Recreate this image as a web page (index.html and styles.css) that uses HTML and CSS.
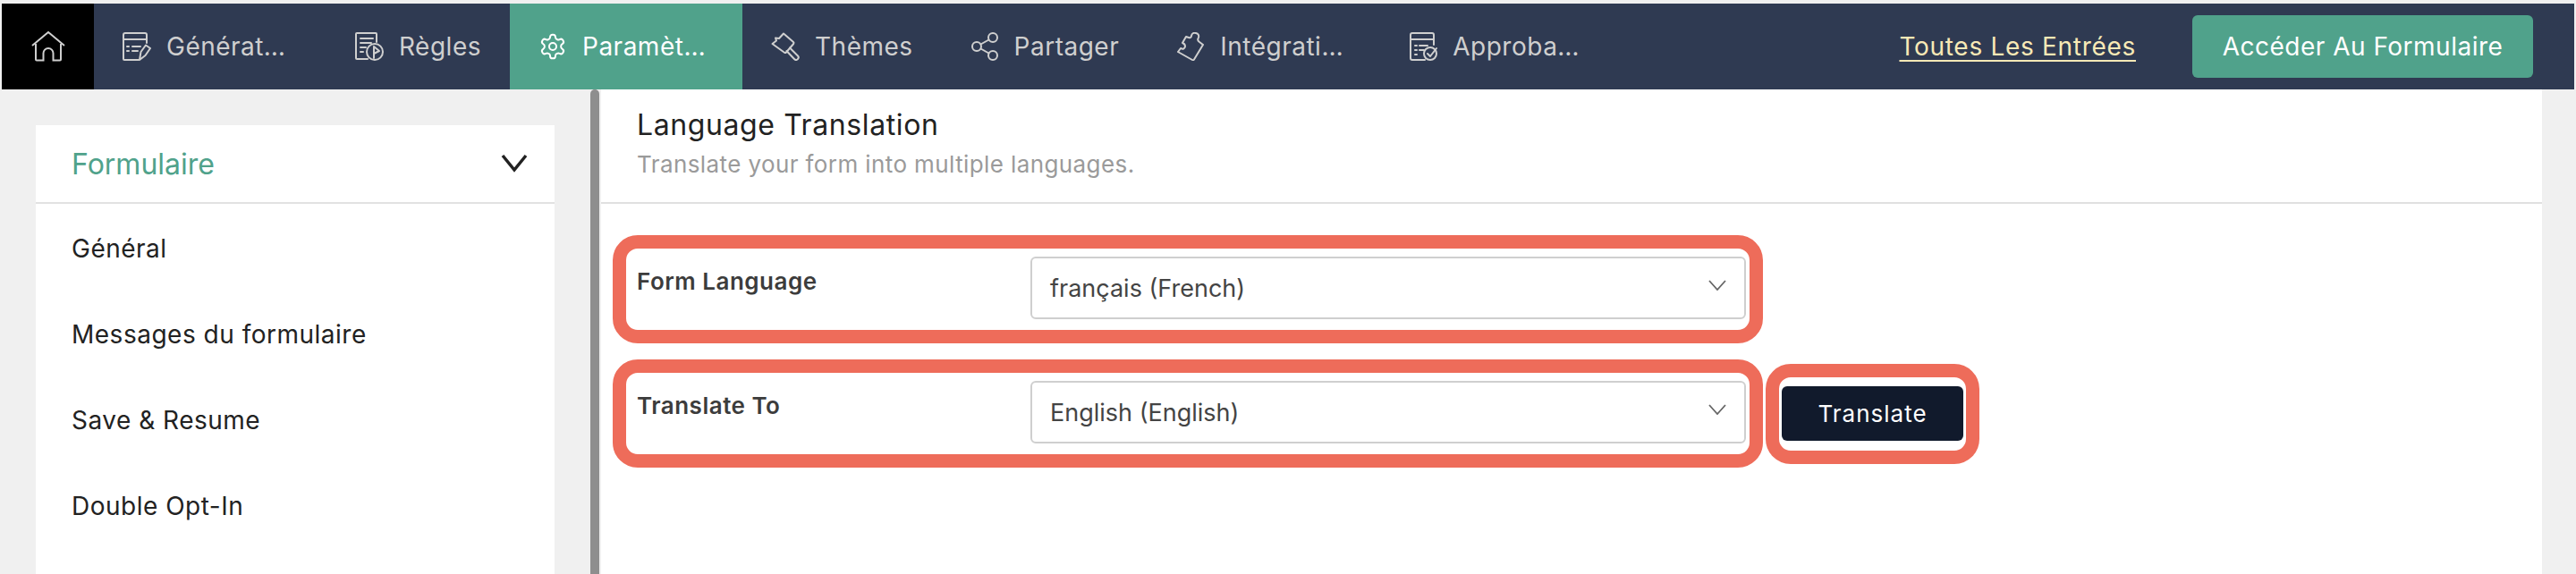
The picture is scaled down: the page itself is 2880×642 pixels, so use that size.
FILE: index.html
```html
<!DOCTYPE html>
<html lang="fr">
<head>
<meta charset="utf-8">
<title>Language Translation</title>
<link rel="stylesheet" href="styles.css">
</head>
<body>
<nav class="topbar">
  <a class="home" href="#"><svg class="ic-home" viewBox="0 0 38 34"><path d="M1 16 19 1l18 15M5 14v17.500a1 1 0 0 0 1 1h7.500v-8a5.500 5.500 0 0 1 11 0v8H32a1 1 0 0 0 1-1V14"/></svg></a>
  <a class="item" href="#"><svg class="icon" viewBox="0 0 32 32"><path d="M27 12V3a2 2 0 0 0-2-2H3a2 2 0 0 0-2 2v27a1 1 0 0 0 1 1h16M1 8h26M5 16h2M11 16h9M5 21h2M11 21h6"/><path d="m19 31 1.500-9L26 14.500l5 3.500-5.500 8z"/></svg><span class="label">Générateur</span></a>
  <a class="item" href="#"><svg class="icon" viewBox="0 0 32 32"><path d="M24 11V2a1 1 0 0 0-1-1H2a1 1 0 0 0-1 1v27a1 1 0 0 0 1 1h12M6 7h14M6 12h12M6 17h6M6 22h3"/><circle cx="22" cy="22" r="9"/><path d="M21 29V16l6 5-6 3"/></svg><span class="label">Règles</span></a>
  <a class="item active" href="#"><svg class="icon" viewBox="0 0 24 24"><path d="M12.220 2h-.44a2 2 0 0 0-2 2v.18a2 2 0 0 1-1 1.730l-.43.25a2 2 0 0 1-2 0l-.15-.08a2 2 0 0 0-2.730.73l-.22.38a2 2 0 0 0 .73 2.730l.15.1a2 2 0 0 1 1 1.720v.51a2 2 0 0 1-1 1.740l-.15.09a2 2 0 0 0-.73 2.730l.22.38a2 2 0 0 0 2.730.73l.15-.08a2 2 0 0 1 2 0l.43.25a2 2 0 0 1 1 1.730V20a2 2 0 0 0 2 2h.44a2 2 0 0 0 2-2v-.18a2 2 0 0 1 1-1.730l.43-.25a2 2 0 0 1 2 0l.15.08a2 2 0 0 0 2.730-.73l.22-.39a2 2 0 0 0-.73-2.730l-.15-.08a2 2 0 0 1-1-1.740v-.5a2 2 0 0 1 1-1.740l.15-.09a2 2 0 0 0 .73-2.730l-.22-.38a2 2 0 0 0-2.730-.73l-.15.08a2 2 0 0 1-2 0l-.43-.25a2 2 0 0 1-1-1.730V4a2 2 0 0 0-2-2z"/><circle cx="12" cy="12" r="3"/></svg><span class="label">Paramètres</span></a>
  <a class="item" href="#"><svg class="icon" viewBox="0 0 32 32"><path d="M14 1.500 25 11a1.500 1.500 0 0 1 .2 2L17 22.500a1.500 1.500 0 0 1-2 .2L1.500 13 6 9.500 5 6.500l4 .5z"/><path d="m17.500 21 8.500 9a2.500 2.500 0 0 0 4-3.500l-9-9"/></svg><span class="label">Thèmes</span></a>
  <a class="item" href="#"><svg class="icon" viewBox="0 0 32 32"><circle cx="7" cy="16" r="5"/><circle cx="25" cy="6" r="5"/><circle cx="25" cy="26" r="5"/><path d="m11.500 13.500 9-5M11.500 18.500l9 5"/></svg><span class="label">Partager</span></a>
  <a class="item" href="#"><svg class="icon" viewBox="0 0 32 32"><path d="M2 22 18 31a1.500 1.500 0 0 0 2-.5L30 14l-4-3q-3-2-1-5 1-4-3-5-4-1-5 3-.500 3-3 2L11 5l-4 7q3 1 3 4-1 4-5 2z"/></svg><span class="label">Intégrations</span></a>
  <a class="item" href="#"><svg class="icon" viewBox="0 0 32 32"><path d="M28 14V3a2 2 0 0 0-2-2H4a2 2 0 0 0-2 2v26a2 2 0 0 0 2 2h14M2 8h26M7 15h2M12 15h9M7 20h2M12 20h5M7 25h2"/><circle cx="24" cy="24" r="7"/><path d="m21 24 3 3 7-9"/></svg><span class="label">Approbation</span></a>
  <div class="topbar-end">
    <a class="entries" href="#">Toutes Les Entrées</a>
    <a class="open-form" href="#">Accéder Au Formulaire</a>
  </div>
</nav>
<main class="layout">
  <aside class="sidebar">
    <div class="side-card">
      <div class="side-head"><span>Formulaire</span><svg class="side-chev" viewBox="0 0 30 24"><path d="m2 3 13 16L28 3"/></svg></div>
      <ul class="side-list">
        <li>Général</li>
        <li>Messages du formulaire</li>
        <li>Save &amp; Resume</li>
        <li>Double Opt-In</li>
      </ul>
    </div>
  </aside>
  <div class="resizer"></div>
  <section class="panel">
    <header class="panel-head">
      <h1>Language Translation</h1>
      <p>Translate your form into multiple languages.</p>
    </header>
    <div class="panel-body">
      <div class="row">
        <div class="mark field">
          <label class="field-label">Form Language</label>
          <div class="select"><span>français (French)</span><svg class="sel-chev" viewBox="0 0 20 12"><path d="m1 1 9 10 9-10"/></svg></div>
        </div>
      </div>
      <div class="row">
        <div class="mark field">
          <label class="field-label">Translate To</label>
          <div class="select"><span>English (English)</span><svg class="sel-chev" viewBox="0 0 20 12"><path d="m1 1 9 10 9-10"/></svg></div>
        </div>
        <div class="mark mark-btn"><button class="translate">Translate</button></div>
      </div>
    </div>
  </section>
</main>
</body>
</html>
```
FILE: styles.css
```css
* { box-sizing: border-box; }
html, body { margin: 0; height: 100%; }
body {
  background: #f0f0f0;
  font-family: Inter, "Liberation Sans", sans-serif;
  overflow: hidden;
  padding-top: 4px;
}
a { text-decoration: none; color: inherit; }

.topbar {
  display: flex;
  height: 96px;
  margin: 0 2px;
  background: #2f3a52;
  color: #cfcfcf;
  font-size: 28px;
  letter-spacing: .5px;
}
.home {
  display: flex;
  align-items: center;
  justify-content: center;
  width: 103px;
  background: #000;
}
.ic-home { width: 38px; height: 34px; fill: none; stroke: #cfcfcf; stroke-width: 2; }
.item {
  display: flex;
  align-items: center;
  gap: 17px;
  padding: 0 32px;
}
.item.active { background: #50a28b; color: #fff; }
.icon { width: 32px; height: 32px; flex: none; fill: none; stroke: currentColor; stroke-width: 2; stroke-linejoin: round; stroke-linecap: round; }
.item.active .icon { stroke-width: 1.5; }
.label {
  max-width: 147px;
  overflow: hidden;
  white-space: nowrap;
  text-overflow: ellipsis;
}
.topbar-end {
  display: flex;
  align-items: center;
  gap: 63px;
  margin-left: auto;
  padding-right: 46px;
}
.entries { color: #f8e9b6; letter-spacing: .7px; text-decoration: underline; text-underline-offset: 5px; text-decoration-thickness: 2px; }
.open-form {
  display: flex;
  align-items: center;
  justify-content: center;
  width: 381px;
  height: 70px;
  border-radius: 6px;
  background: #50a28b;
  color: #fff;
}

.layout { display: flex; height: 542px; }
.sidebar { width: 660px; padding: 40px 40px 0; }
.side-card { background: #fff; height: 100%; }
.side-head {
  display: flex;
  align-items: center;
  justify-content: space-between;
  height: 88px;
  padding: 0 30px 0 40px;
  border-bottom: 2px solid #e2e2e2;
  color: #50a28b;
  font-size: 32px;
}
.side-chev { width: 30px; height: 24px; fill: none; stroke: #222; stroke-width: 3.500; }
.side-list { margin: 0; padding: 0 0 0 40px; list-style: none; color: #222; font-size: 28px; letter-spacing: .5px; }
.side-list li { height: 96px; line-height: 96px; position: relative; top: 2px; }
.resizer { width: 10px; background: #8e8e8e; border-radius: 5px 5px 0 0; margin-right: 2px; }

.panel { width: 2170px; background: #fff; }
.panel-head { height: 128px; padding: 19px 0 0 40px; border-bottom: 2px solid #e0e0e0; }
.panel-head h1 { margin: 0; font-size: 32px; font-weight: 400; line-height: 42px; letter-spacing: .6px; color: #222; }
.panel-head p { margin: 3px 0 0; font-size: 26px; line-height: 40px; letter-spacing: .4px; color: #9a9a9a; }
.panel-body { padding: 35px 0 0 13px; display: flex; flex-direction: column; gap: 18px; }
.row { display: flex; align-items: center; gap: 3px; }
.mark { border: 15px solid #ee6c5a; border-radius: 28px; }
.field { display: flex; width: 1286px; height: 121px; padding: 9px 4px 12px 12px; }
.field-label { width: 440px; margin-top: 8px; font-size: 26px; font-weight: 600; line-height: 40px; letter-spacing: .5px; color: #3c3c3c; }
.select {
  display: flex;
  align-items: center;
  justify-content: space-between;
  width: 800px;
  height: 70px;
  padding: 0 20px 0 20px;
  border: 2px solid #cfcfcf;
  border-radius: 6px;
  font-size: 27px;
  color: #444;
}
.sel-chev { width: 20px; height: 12px; fill: none; stroke: #666; stroke-width: 1.800; margin-top: -6px; }
.mark-btn { display: flex; align-items: center; width: 239px; height: 112px; padding-left: 3px; }
.translate {
  width: 203px;
  height: 61px;
  border: 0;
  border-radius: 6px;
  background: #111a2c;
  color: #fff;
  font: 400 26px Inter, "Liberation Sans", sans-serif;
  letter-spacing: 1px;
}
```
